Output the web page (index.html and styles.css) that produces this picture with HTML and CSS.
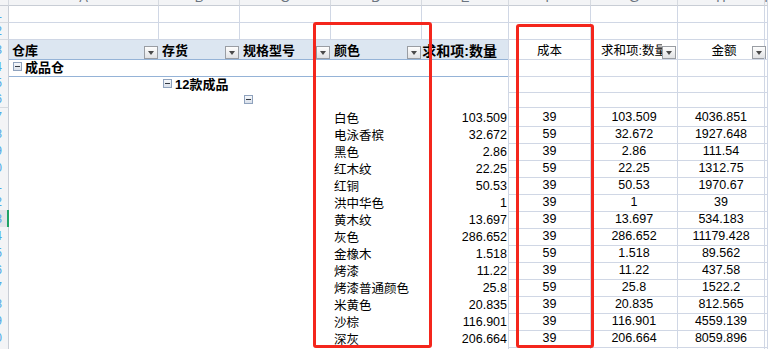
FILE: index.html
```html
<!DOCTYPE html>
<html lang="zh-CN">
<head>
<meta charset="utf-8">
<title>数据透视表</title>
<link rel="stylesheet" href="styles.css">
</head>
<body>
<div class="sheet">
  <div class="row colhead">
    <div class="ch corner"></div>
    <div class="ch"><span>A</span></div><div class="ch"><span>B</span></div><div class="ch"><span>C</span></div><div class="ch"><span>D</span></div><div class="ch"><span>E</span></div><div class="ch"><span>F</span></div><div class="ch"><span>G</span></div><div class="ch"><span>H</span></div><div class="ch"><span>I</span></div>
  </div>
  <div class="row">
    <div class="rh"><span>1</span></div>
    <div class="g"></div><div class="g"></div><div class="g"></div><div class="g"></div><div class="g"></div><div class="g"></div><div class="g"></div><div class="g"></div><div class="g"></div>
  </div>
  <div class="row">
    <div class="rh"><span>2</span></div>
    <div class="g"></div><div class="g"></div><div class="g"></div><div class="g"></div><div class="g"></div><div class="g"></div><div class="g"></div><div class="g"></div><div class="g"></div>
  </div>
  <div class="row">
    <div class="rh"><span>3</span></div>
    <div class="ph hd"><span class="lbl b">仓库</span><i class="dd"></i></div>
    <div class="ph hd"><span class="lbl b">存货</span><i class="dd"></i></div>
    <div class="ph hd"><span class="lbl b">规格型号</span><i class="dd"></i></div>
    <div class="ph hd"><span class="lbl b">颜色</span><i class="dd"></i></div>
    <div class="ph er sumh"><span class="b">求和项:数量</span></div>
    <div class="g c">成本</div>
    <div class="g hg"><span class="lbl">求和项:数量</span><i class="dd"></i></div>
    <div class="g hh"><span class="lbl ctr">金额</span><i class="dd ddh"></i></div>
    <div class="g"></div>
  </div>
  <div class="row">
    <div class="rh"><span>4</span></div>
    <div class="pb"><i class="tg"></i><span class="b">成品仓</span></div>
    <div class="pb"></div><div class="pb"></div><div class="pb"></div><div class="pb er"></div>
    <div class="g"></div><div class="g"></div><div class="g"></div><div class="g"></div>
  </div>
  <div class="row">
    <div class="rh"><span>5</span></div>
    <div></div>
    <div><i class="tg"></i><span class="b">12款成品</span></div>
    <div></div><div></div><div class="er"></div>
    <div class="g"></div><div class="g"></div><div class="g"></div><div class="g"></div>
  </div>
  <div class="row">
    <div class="rh"><span>6</span></div>
    <div></div><div></div>
    <div><i class="tg"></i></div>
    <div></div><div class="er"></div>
    <div class="g"></div><div class="g"></div><div class="g"></div><div class="g"></div>
  </div>
  <div class="row">
    <div class="rh"><span>7</span></div>
    <div></div><div></div><div></div><div class="clr">白色</div><div class="er n">103.509</div>
    <div class="g c">39</div><div class="g c">103.509</div><div class="g c">4036.851</div><div class="g"></div>
  </div>
  <div class="row">
    <div class="rh"><span>8</span></div>
    <div></div><div></div><div></div><div class="clr">电泳香槟</div><div class="er n">32.672</div>
    <div class="g c">59</div><div class="g c">32.672</div><div class="g c">1927.648</div><div class="g"></div>
  </div>
  <div class="row">
    <div class="rh"><span>9</span></div>
    <div></div><div></div><div></div><div class="clr">黑色</div><div class="er n">2.86</div>
    <div class="g c">39</div><div class="g c">2.86</div><div class="g c">111.54</div><div class="g"></div>
  </div>
  <div class="row">
    <div class="rh"><span>10</span></div>
    <div></div><div></div><div></div><div class="clr">红木纹</div><div class="er n">22.25</div>
    <div class="g c">59</div><div class="g c">22.25</div><div class="g c">1312.75</div><div class="g"></div>
  </div>
  <div class="row">
    <div class="rh"><span>11</span></div>
    <div></div><div></div><div></div><div class="clr">红铜</div><div class="er n">50.53</div>
    <div class="g c">39</div><div class="g c">50.53</div><div class="g c">1970.67</div><div class="g"></div>
  </div>
  <div class="row">
    <div class="rh"><span>12</span></div>
    <div></div><div></div><div></div><div class="clr">洪中华色</div><div class="er n">1</div>
    <div class="g c">39</div><div class="g c">1</div><div class="g c">39</div><div class="g"></div>
  </div>
  <div class="row">
    <div class="rh sel"><span>13</span></div>
    <div></div><div></div><div></div><div class="clr">黄木纹</div><div class="er n">13.697</div>
    <div class="g c">39</div><div class="g c">13.697</div><div class="g c">534.183</div><div class="g"></div>
  </div>
  <div class="row">
    <div class="rh"><span>14</span></div>
    <div></div><div></div><div></div><div class="clr">灰色</div><div class="er n">286.652</div>
    <div class="g c">39</div><div class="g c">286.652</div><div class="g c">11179.428</div><div class="g"></div>
  </div>
  <div class="row">
    <div class="rh"><span>15</span></div>
    <div></div><div></div><div></div><div class="clr">金橡木</div><div class="er n">1.518</div>
    <div class="g c">59</div><div class="g c">1.518</div><div class="g c">89.562</div><div class="g"></div>
  </div>
  <div class="row">
    <div class="rh"><span>16</span></div>
    <div></div><div></div><div></div><div class="clr">烤漆</div><div class="er n">11.22</div>
    <div class="g c">39</div><div class="g c">11.22</div><div class="g c">437.58</div><div class="g"></div>
  </div>
  <div class="row">
    <div class="rh"><span>17</span></div>
    <div></div><div></div><div></div><div class="clr">烤漆普通颜色</div><div class="er n">25.8</div>
    <div class="g c">59</div><div class="g c">25.8</div><div class="g c">1522.2</div><div class="g"></div>
  </div>
  <div class="row">
    <div class="rh"><span>18</span></div>
    <div></div><div></div><div></div><div class="clr">米黄色</div><div class="er n">20.835</div>
    <div class="g c">39</div><div class="g c">20.835</div><div class="g c">812.565</div><div class="g"></div>
  </div>
  <div class="row">
    <div class="rh"><span>19</span></div>
    <div></div><div></div><div></div><div class="clr">沙棕</div><div class="er n">116.901</div>
    <div class="g c">39</div><div class="g c">116.901</div><div class="g c">4559.139</div><div class="g"></div>
  </div>
  <div class="row">
    <div class="rh"><span>20</span></div>
    <div></div><div></div><div></div><div class="clr">深灰</div><div class="er n">206.664</div>
    <div class="g c">39</div><div class="g c">206.664</div><div class="g c">8059.896</div><div class="g"></div>
  </div>
  <div class="row">
    <div class="rh"><span>21</span></div>
    <div></div>
    <div><i class="tg"></i><span class="b">13款成品</span></div>
    <div></div><div></div><div class="er"></div>
    <div class="g"></div><div class="g"></div><div class="g"></div><div class="g"></div>
  </div>
</div>
<div class="mark mark-color"></div>
<div class="mark mark-cost"></div>
</body>
</html>
```
FILE: styles.css
```css
* { box-sizing: border-box; }
html, body { margin: 0; padding: 0; background: #ffffff; overflow: hidden; }
body {
  position: relative;
  width: 768px;
  height: 349px;
  font-family: "Liberation Sans", "Noto Sans CJK SC", sans-serif;
  font-size: 12.5px;
  color: #000000;
}
.sheet { display: flex; flex-direction: column; }
.row {
  display: grid;
  grid-template-columns: 9px 150px 81px 91px 91px 87px 82px 87px 87px 1fr;
  height: 17px;
  flex: none;
}
.row > div {
  display: flex;
  align-items: center;
  white-space: nowrap;
  min-width: 0;
  padding-top: 0;
}
.row.colhead { height: 6px; }
.ch {
  background: #f3f4f6;
  border-right: 1px solid #d6dae0;
  border-bottom: 1px solid #c8cdd5;
  overflow: hidden;
  justify-content: center;
  align-items: flex-end !important;
  color: #6b7480;
  font-size: 13px;
  line-height: 14px;
}
.rh {
  background: #f3f4f6;
  border-right: 1px solid #c8cdd5;
  border-bottom: 1px solid #d6dae0;
  overflow: hidden;
  justify-content: flex-end;
  padding-right: 6px;
  color: #4aa8e8;
  font-size: 12px;
}
.rh.sel {
  background: #e2e4e8;
  border-right-color: #21a366;
  box-shadow: inset -1px 0 0 #21a366;
}
.g { border-right: 1px solid #d0d7e5; border-bottom: 1px solid #d0d7e5; }
.er { border-right: 1px solid #d0d7e5; }
.ph { background: #dce6f1; border-bottom: 1px solid #95b3d7; }
.pb { border-bottom: 1px solid #95b3d7; }
.b { font-weight: bold; font-size: 13px; }
.hd { padding-left: 3px; }
.lbl { flex: 1; min-width: 0; overflow: hidden; }
.ctr { text-align: center; padding-left: 18px; }
.sumh { justify-content: flex-end; overflow: hidden; padding-right: 11px; }
.sumh .b { font-size: 14px; }
.hg { padding-left: 10px; }
.dd {
  flex: none;
  width: 14px;
  height: 13px;
  margin-right: 1px;
  align-self: flex-end;
  border: 1px solid #999da3;
  background: linear-gradient(#fdfdfd, #e1e2e4);
  display: flex;
  align-items: center;
  justify-content: center;
}
.dd::after {
  content: "";
  border-left: 3.5px solid transparent;
  border-right: 3.5px solid transparent;
  border-top: 4px solid #4a4a4a;
}
.ddh { margin-right: -2px; }
.tg {
  flex: none;
  width: 9px;
  height: 9px;
  margin: 0 3px 0 4px;
  border: 1px solid #8fa2bd;
  background: linear-gradient(#f6f8fb, #d9e0ea);
  display: flex;
  align-items: center;
  justify-content: center;
}
.tg::after { content: ""; width: 5px; height: 1px; background: #333a44; }
.clr { padding-left: 3px; }
.n { justify-content: flex-end; padding-right: 1px; }
.c { justify-content: center; }
.mark {
  position: absolute;
  border: 3px solid #f4261c;
  border-radius: 3px;
  pointer-events: none;
}
.mark-color { left: 313px; top: 22px; width: 119px; height: 326px; }
.mark-cost { left: 516px; top: 24px; width: 78px; height: 324px; }
```
